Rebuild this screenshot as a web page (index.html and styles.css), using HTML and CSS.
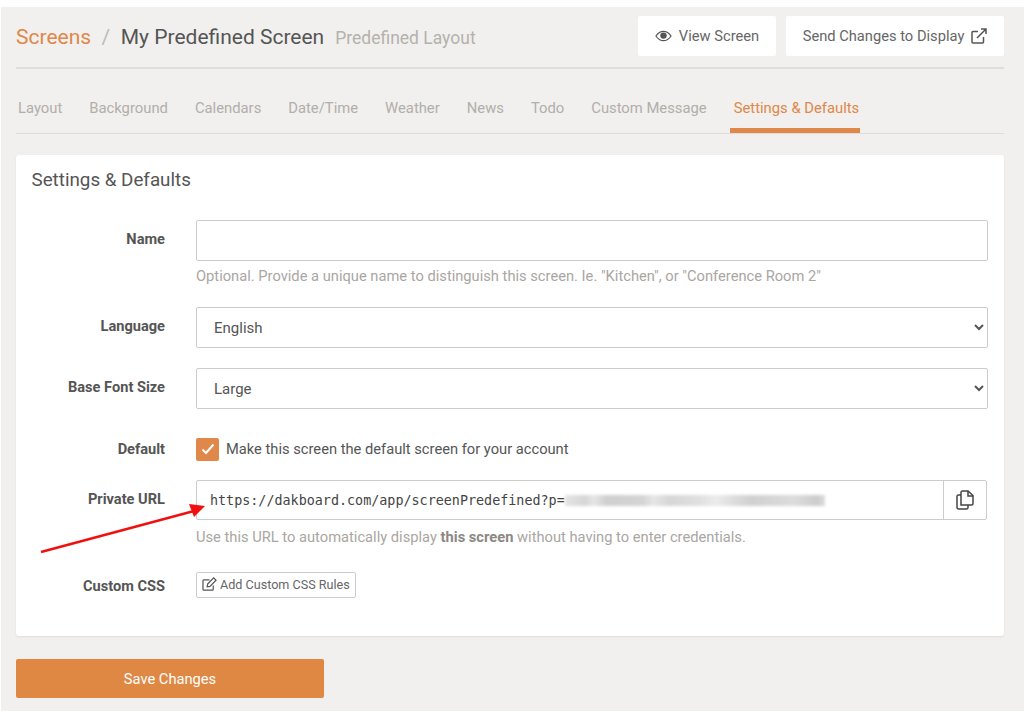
FILE: index.html
```html
<!DOCTYPE html>
<html lang="en">
<head>
    <meta charset="UTF-8">
    <title>Settings &amp; Defaults</title>
    <link rel="stylesheet" href="styles.css">
</head>
<body>
    <div class="page">
        <div class="page-header">
            <h1 class="crumbs">
                <a class="crumb-link" href="#">Screens</a>
                <span class="crumb-sep">/</span>
                <span class="crumb-name">My Predefined Screen</span>
                <small class="crumb-sub">Predefined Layout</small>
            </h1>
            <div class="header-btns">
                <a class="head-btn btn-view" href="#">
                    <svg class="icon-eye" viewBox="0 0 18 12" width="17" height="12">
                        <path d="M1 6c2-3 5-5 8-5s6 2 8 5c-2 3-5 5-8 5s-6-2-8-5z" fill="none" stroke="#555" stroke-width="1.3"/>
                        <circle cx="9" cy="5.6" r="3.4" fill="#555"/>
                    </svg>
                    View Screen
                </a>
                <a class="head-btn btn-send" href="#">
                    Send Changes to Display
                    <svg viewBox="0 0 16 16" width="16" height="16" fill="none" stroke="#555" stroke-width="1.5">
                        <path d="M12.5 9v5a1 1 0 0 1-1 1H2a1 1 0 0 1-1-1V4.500a1 1 0 0 1 1-1h5"/>
                        <path d="M6 10 15 1M10 1h5v5"/>
                    </svg>
                </a>
            </div>
        </div>

        <div class="tabs">
            <a href="#">Layout</a>
            <a href="#">Background</a>
            <a href="#">Calendars</a>
            <a href="#">Date/Time</a>
            <a href="#">Weather</a>
            <a href="#">News</a>
            <a href="#">Todo</a>
            <a href="#">Custom Message</a>
            <a href="#" class="active">Settings &amp; Defaults</a>
        </div>

        <div class="panel">
            <h2 class="panel-title">Settings &amp; Defaults</h2>
            <form>
                <div class="row row-name">
                    <label for="name">Name</label>
                    <div class="field">
                        <input type="text" id="name">
                        <p class="help">Optional. Provide a unique name to distinguish this screen. Ie. "Kitchen", or "Conference Room 2"</p>
                    </div>
                </div>
                <div class="row row-language">
                    <label for="language">Language</label>
                    <div class="field">
                        <select id="language"><option>English</option></select>
                    </div>
                </div>
                <div class="row row-font">
                    <label for="fontsize">Base Font Size</label>
                    <div class="field">
                        <select id="fontsize"><option>Large</option></select>
                    </div>
                </div>
                <div class="row row-default">
                    <label>Default</label>
                    <div class="field check-field">
                        <span class="check">
                            <svg viewBox="0 0 14 12" width="14" height="12" fill="none" stroke="#fff" stroke-width="2">
                                <path d="M1.500 6.500 5 10l7.500-8.500"/>
                            </svg>
                        </span>
                        Make this screen the default screen for your account
                    </div>
                </div>
                <div class="row row-url">
                    <label>Private URL</label>
                    <div class="field">
                        <div class="url-group">
                            <div class="url-box">
                                <span class="url-text">https://dakboard.com/app/screenPredefined?p=</span>
                                <span class="url-blur"></span>
                            </div>
                            <div class="url-copy">
                                <svg viewBox="0 0 18 20" width="18" height="20" fill="none" stroke="#444" stroke-width="1.500">
                                    <path d="M5 15V2.500a1.500 1.500 0 0 1 1.500-1.500H12l5 4.500v8a1.500 1.500 0 0 1-1.500 1.500H5z"/>
                                    <path d="M12 1v5h5"/>
                                    <path d="M5 5H2.500A1.500 1.500 0 0 0 1 6.500v11A1.500 1.500 0 0 0 2.500 19h8a1.500 1.500 0 0 0 1.500-1.500V15"/>
                                </svg>
                            </div>
                        </div>
                        <p class="help help-url">Use this URL to automatically display <strong>this screen</strong> without having to enter credentials.</p>
                    </div>
                </div>
                <div class="row row-css">
                    <label>Custom CSS</label>
                    <div class="field">
                        <a class="small-btn" href="#">
                            <svg viewBox="0 0 16 15" width="15" height="14" fill="none" stroke="#555" stroke-width="1.300">
                                <path d="M12 9v4a1 1 0 0 1-1 1H2a1 1 0 0 1-1-1V4a1 1 0 0 1 1-1h6"/>
                                <path d="M6 7.500 12.500 1 15 3.500 8.500 10 5.500 10.500z"/>
                            </svg>
                            Add Custom CSS Rules
                        </a>
                    </div>
                </div>
            </form>
        </div>

        <a class="save-btn" href="#">Save Changes</a>
    </div>

    <!-- annotation arrow over the screenshot -->
    <svg class="arrow" width="1024" height="718" viewBox="0 0 1024 718">
        <path d="M41 552 194 511" stroke="#f01010" stroke-width="2.400"/>
        <path d="M205 506 189 504 194 517z" fill="#f01010"/>
    </svg>
</body>
</html>
```

FILE: styles.css
```css
body {
    margin: 0;
    background-color: #fff;
    font-family: Roboto, "Liberation Sans", sans-serif;
    color: #555;
}
a {
    text-decoration: none;
}
.page {
    margin: 7px 0 0 1px;
    height: 704px;
    box-sizing: border-box;
    padding: 9px 20px 0 15px;
    background-color: #f1f0ee;
}
.page-header {
    display: flex;
    justify-content: space-between;
    height: 51px;
    border-bottom: 2px solid #ddd;
}
.crumbs {
    margin: 0;
    display: flex;
    align-items: baseline;
    height: 40px;
    line-height: 42px;
    font-size: 21px;
    font-weight: 400;
}
.crumb-link {
    color: #e0874a;
}
.crumb-sep {
    margin: 0 10.500px;
    color: #bbb;
}
.crumb-name {
    color: #555;
}
.crumb-sub {
    margin-left: 11px;
    font-size: 17.500px;
    color: #b5b1ad;
}
.header-btns {
    display: flex;
    gap: 10px;
}
.head-btn {
    display: flex;
    align-items: center;
    justify-content: center;
    height: 40px;
    background-color: #fff;
    border-radius: 2px;
    font-size: 14.700px;
    color: #666;
}
.btn-view {
    width: 138px;
    gap: 7px;
}
.btn-send {
    width: 218px;
    gap: 7px;
}
.tabs {
    display: flex;
    height: 64px;
    border-bottom: 1px solid #ddd;
}
.tabs a {
    margin-right: 23px;
    padding: 0 2px;
    box-sizing: border-box;
    height: 64px;
    line-height: 78px;
    font-size: 14.800px;
    color: #b2aeaa;
}
.tabs a.active {
    margin-left: -2px;
    padding: 0 1px 0 4px;
    color: #e0874a;
    border-bottom: 5px solid #e0874a;
}
.panel {
    margin-top: 21px;
    height: 481px;
    box-sizing: border-box;
    padding: 0 16px;
    background-color: #fff;
    border-radius: 3px;
    box-shadow: 0 1px 2px rgba(0, 0, 0, 0.08);
}
.panel-title {
    margin: 0 0 0 -0.500px;
    padding-top: 13px;
    height: 65px;
    box-sizing: border-box;
    line-height: 24px;
    font-size: 18.800px;
    font-weight: 400;
    color: #555;
}
.row {
    display: flex;
}
.row label {
    width: 133px;
    margin-right: 31px;
    flex-shrink: 0;
    text-align: right;
    font-size: 14.600px;
    font-weight: 700;
    color: #555;
}
.field {
    flex: 1;
}
.row-name label {
    padding-top: 10px;
}
.row-language {
    margin-top: 22px;
}
.row-language label, .row-font label {
    padding-top: 10px;
}
.row-font {
    margin-top: 20px;
}
.row-default {
    margin-top: 28px;
    align-items: center;
    height: 24px;
}
.row-url {
    margin-top: 19px;
}
.row-url label {
    padding-top: 10px;
}
.row-css {
    margin-top: 26px;
}
.row-css label {
    padding-top: 5px;
}
input[type="text"], select {
    display: block;
    width: 100%;
    box-sizing: border-box;
    height: 41px;
    padding: 0 13px;
    background-color: #fff;
    border: 1px solid #ccc;
    border-radius: 2px;
    font-family: Roboto, "Liberation Sans", sans-serif;
    font-size: 15px;
    color: #555;
}
.help {
    margin: 7px 0 0;
    line-height: 17px;
    font-size: 14.700px;
    color: #aaa6a2;
}
.help-url {
    margin-top: 9px;
}
.help strong {
    color: #8c8884;
}
.check-field {
    display: flex;
    align-items: center;
    gap: 7px;
    font-size: 14.700px;
    color: #555;
}
.check {
    display: flex;
    align-items: center;
    justify-content: center;
    width: 23px;
    height: 23px;
    background-color: #e0874a;
    border-radius: 2px;
}
.url-group {
    display: flex;
    height: 40px;
    margin-right: 1px;
    box-sizing: border-box;
    border: 1px solid #ccc;
    border-radius: 2px;
}
.url-box {
    flex: 1;
    display: flex;
    align-items: center;
    padding-left: 13px;
}
.url-text {
    font-family: "DejaVu Sans Mono", monospace;
    font-size: 13.400px;
    color: #444;
}
.url-blur {
    width: 260px;
    height: 11px;
    background: linear-gradient(90deg, #e4e4e4 0, #d6d6d6 8%, #e6e6e6 11%, #cfcfcf 16%, #d4d4d4 30%, #e6e6e6 34%, #d6d6d6 40%, #e0e0e0 52%, #ececec 58%, #dedede 64%, #d0d0d0 72%, #dcdcdc 88%, #cccccc 97%, #dcdcdc 100%);
    filter: blur(1.500px);
}
.url-copy {
    width: 42px;
    display: flex;
    align-items: center;
    justify-content: center;
    border-left: 1px solid #ccc;
}
.small-btn {
    display: inline-flex;
    align-items: center;
    gap: 3px;
    height: 26px;
    box-sizing: border-box;
    padding: 0 5px 2px 5px;
    border: 1px solid #ccc;
    border-radius: 2px;
    font-size: 12.600px;
    color: #666;
}
.save-btn {
    display: block;
    margin-top: 23px;
    width: 308px;
    height: 39px;
    line-height: 41px;
    text-align: center;
    background-color: #de8844;
    border-radius: 2px;
    font-size: 14.700px;
    color: #fff;
}
.arrow {
    position: absolute;
    left: 0;
    top: 0;
    pointer-events: none;
}
```
